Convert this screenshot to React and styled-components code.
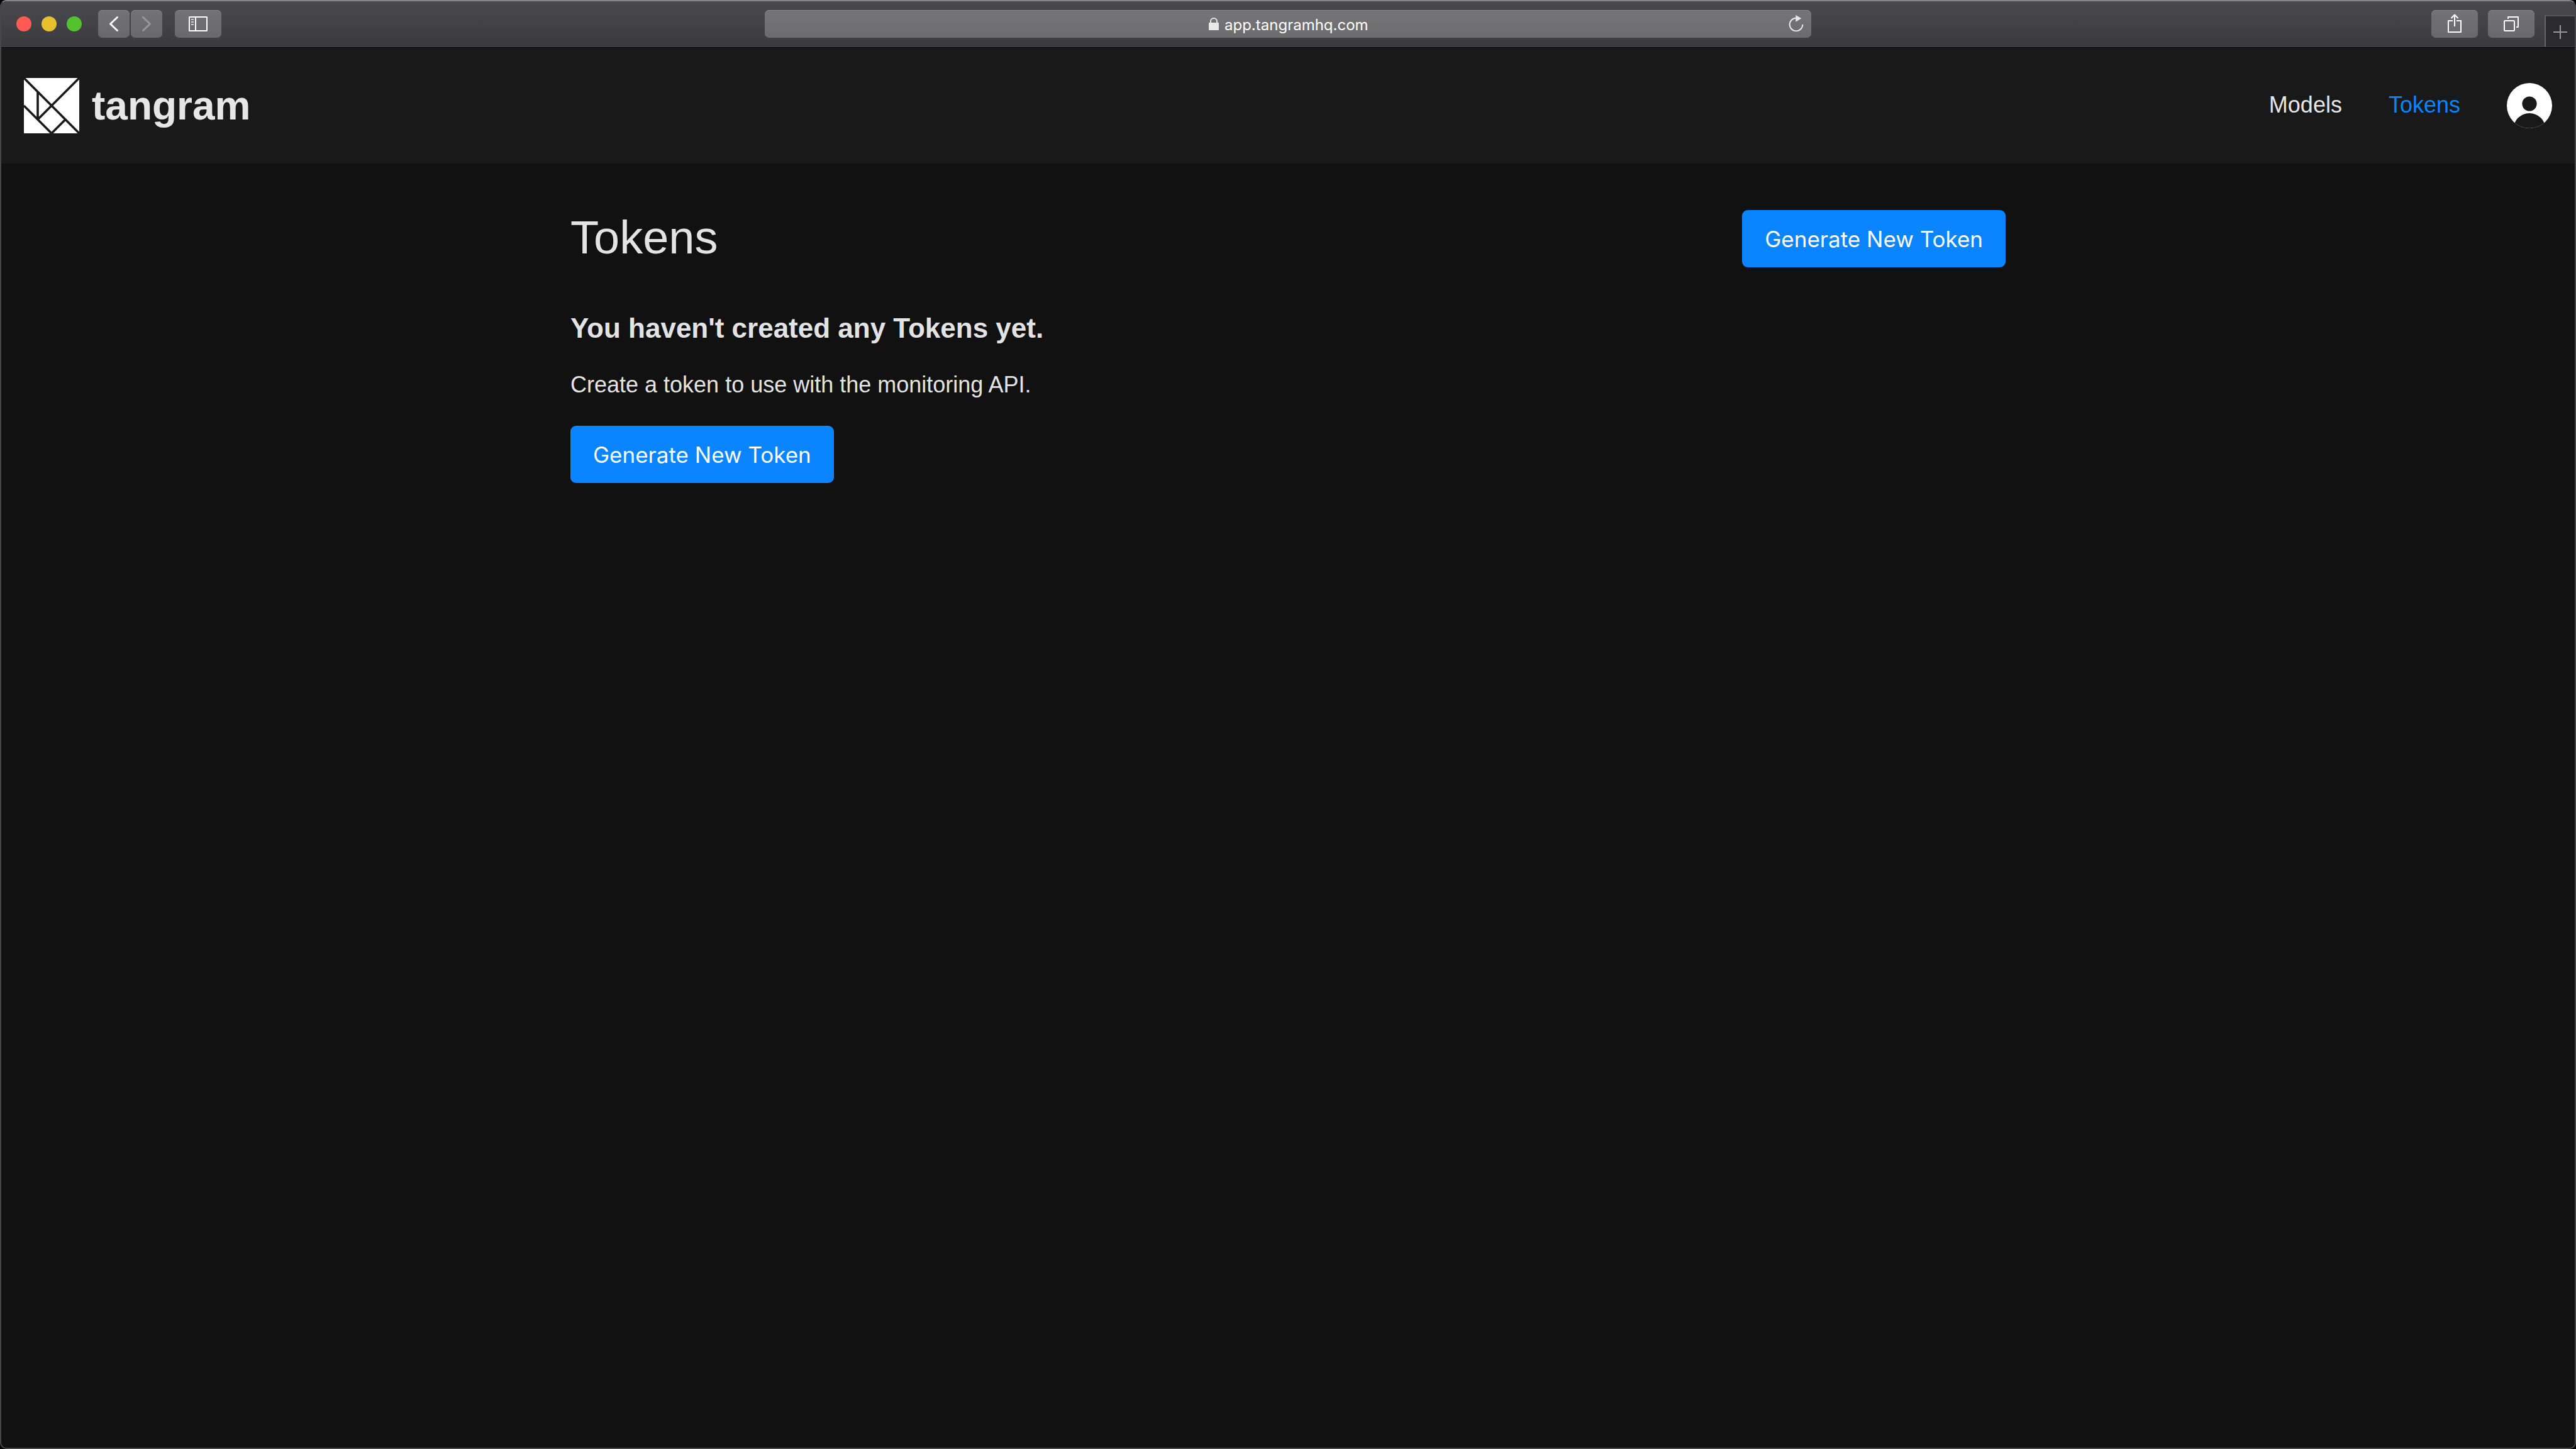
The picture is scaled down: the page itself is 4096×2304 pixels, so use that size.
import React from "react";
import styled, { createGlobalStyle } from "styled-components";

const GlobalStyle = createGlobalStyle`
  *, *::before, *::after { box-sizing: border-box; }
  body {
    margin: 0;
    background: #000;
    font-family: "Liberation Sans", Arial, sans-serif;
    font-size: 36px;
    color: #e2e3e2;
  }
  h1, h2, p { margin: 0; }
  a { text-decoration: none; color: inherit; }
  svg { display: block; flex: none; }
`;

const BrowserWindow = styled.div`
  display: flex;
  flex-direction: column;
  min-height: 100vh;
  border: 2px solid #474747;
  border-top-color: #868689;
  border-radius: 10px;
  background: #111;
  overflow: hidden;
`;

const Toolbar = styled.div`
  display: grid;
  grid-template-columns: 1fr minmax(0, 1664px) 1fr;
  align-items: center;
  height: 73px;
  background: linear-gradient(#4a494e, #3b3a3f);
  border-bottom: 1px solid #424146;
`;

const ToolbarStart = styled.div`
  display: flex;
  align-items: center;
  gap: 20px;
  padding-left: 24px;
`;

const ToolbarEnd = styled.div`
  display: flex;
  align-items: center;
  justify-content: flex-end;
  align-self: stretch;
  gap: 16px;
`;

const TrafficLights = styled.div`
  display: flex;
  gap: 16px;
  margin-right: 6px;
`;

const Light = styled.button`
  width: 24px;
  height: 24px;
  padding: 0;
  border: 0;
  border-radius: 50%;
  background: ${(p) => p.$color};
`;

const HistoryButtons = styled.div`
  display: flex;
  gap: 2px;
`;

const ToolButton = styled.button`
  display: flex;
  width: ${(p) => p.$width}px;
  height: 44px;
  padding: 0;
  border: 0;
  border-radius: 7px;
  background: linear-gradient(#737277, #69686d);
  box-shadow: inset 0 1px #88878b;
  color: ${(p) => (p.$muted ? "#98979b" : "#fff")};
`;

const NewTabButton = styled.button`
  align-self: flex-end;
  width: 48px;
  height: 50px;
  padding: 0;
  border: 0 solid #656468;
  border-width: 2px 0 0 2px;
  border-top-color: #555458;
  background: #2b2b2d;
  color: #98989a;
`;

const AddressBar = styled.div`
  display: grid;
  grid-template-columns: 1fr auto 1fr;
  align-items: center;
  height: 44px;
  border-radius: 7px;
  background: linear-gradient(#757577, #6c6c6e);
  box-shadow: inset 0 1px #8a8a8c;
`;

const Address = styled.label`
  grid-column: 2;
  display: flex;
  align-items: center;
  gap: 8px;
  color: #e8e8e8;
`;

const AddressInput = styled.input`
  width: 228px;
  height: 34px;
  padding: 2px 0 0;
  border: 0;
  background: transparent;
  color: #fff;
  font: 24px/32px Inter, sans-serif;
`;

const ReloadButton = styled.button`
  justify-self: end;
  padding: 0;
  margin-right: 12px;
  border: 0;
  background: transparent;
  color: #e8e8e8;
`;

const Header = styled.header`
  display: flex;
  align-items: center;
  justify-content: space-between;
  height: 185px;
  padding: 0 36px;
  border-top: 1px solid #000;
  background: #191919;
`;

const Brand = styled.a`
  display: flex;
  align-items: center;
  gap: 20px;
  font-size: 64px;
  font-weight: 700;
  color: #e6e6e6;
`;

const Nav = styled.nav`
  display: flex;
  align-items: center;
  gap: 74px;
`;

const NavLink = styled.a`
  padding-bottom: 2px;
  && { color: ${(p) => (p.$active ? "#0a84ff" : "#e6e6e6")}; }
`;

const Main = styled.main`
  display: flex;
  flex-direction: column;
  gap: 72px;
  width: 100%;
  max-width: 2282px;
  margin: 0 auto;
  padding: 74px 0;
`;

const TitleRow = styled.div`
  display: flex;
  align-items: flex-start;
  justify-content: space-between;
`;

const Title = styled.h1`
  font-size: 74px;
  font-weight: 400;
  line-height: 88px;
`;

const EmptyState = styled.section`
  display: flex;
  flex-direction: column;
  align-items: flex-start;
  gap: 36px;
`;

const EmptyTitle = styled.h2`
  font-size: 44px;
  line-height: 50px;
`;

const EmptyText = styled.p`
  line-height: 58px;
`;

const PrimaryButton = styled.button`
  height: 91px;
  padding: 0 36px;
  border: 0;
  border-radius: 9px;
  background: #0a84ff;
  color: #fff;
  font-family: Inter, sans-serif;
  font-size: 35px;
`;

const stroke = {
  fill: "none",
  stroke: "currentColor",
  strokeWidth: 2,
  strokeLinejoin: "round",
};

function TangramLogo() {
  return (
    <svg width="88" height="88" viewBox="0 0 88 88" aria-hidden="true">
      <rect width="88" height="88" fill="#fff" />
      <path
        d="M0 0L88 88M88 0L22 66M0 44L44 88M44 88L66 66M22 22V66"
        fill="none"
        stroke="#191919"
        strokeWidth="3.6"
      />
    </svg>
  );
}

function Avatar() {
  return (
    <svg width="72" height="72" viewBox="0 0 72 72" role="img" aria-label="Account">
      <clipPath id="avatar-clip">
        <circle cx="36" cy="36" r="36" />
      </clipPath>
      <g clipPath="url(#avatar-clip)">
        <rect width="72" height="72" fill="#fff" />
        <circle cx="36" cy="33" r="11.6" fill="#191919" />
        <circle cx="36" cy="73.8" r="25.8" fill="#191919" />
      </g>
    </svg>
  );
}

function BrowserToolbar() {
  return (
    <Toolbar>
      <ToolbarStart>
        <TrafficLights>
          <Light $color="#ff5b54" aria-label="Close" />
          <Light $color="#e6c02d" aria-label="Minimize" />
          <Light $color="#54c12e" aria-label="Zoom" />
        </TrafficLights>
        <HistoryButtons>
          <ToolButton $width={50} aria-label="Back">
            <svg width="50" height="44" {...stroke} strokeWidth="3" strokeLinecap="round">
              <path d="M30.5 11.5L19.5 22L30.5 32.5" />
            </svg>
          </ToolButton>
          <ToolButton $width={50} $muted aria-label="Forward">
            <svg width="50" height="44" {...stroke} strokeWidth="3" strokeLinecap="round">
              <path d="M19.5 11.5L30.5 22L19.5 32.5" />
            </svg>
          </ToolButton>
        </HistoryButtons>
        <ToolButton $width={74} aria-label="Sidebar">
          <svg width="74" height="44" {...stroke}>
            <rect x="23" y="11" width="28" height="22" rx="0.5" />
            <path d="M33 11V33" />
            <path d="M26 15H30M26 19H30M26 23H30" stroke="#d0d0d2" />
          </svg>
        </ToolButton>
      </ToolbarStart>
      <AddressBar>
        <Address>
          <svg width="18" height="20" viewBox="0 0 18 20">
            <rect x="1" y="8" width="16" height="12" rx="1" fill="currentColor" />
            <path d="M4 9V6a5 5 0 0 1 10 0V9" {...stroke} />
          </svg>
          <AddressInput aria-label="Address" defaultValue="app.tangramhq.com" />
        </Address>
        <ReloadButton aria-label="Reload">
          <svg width="24" height="30" viewBox="0 0 24 30">
            <path d="M22.3 16A10.3 10.3 0 1 1 12 5.7" {...stroke} />
            <path d="M11.3 1L20.3 6.3L11.3 11.7Z" fill="currentColor" />
          </svg>
        </ReloadButton>
      </AddressBar>
      <ToolbarEnd>
        <ToolButton $width={74} aria-label="Share">
          <svg width="74" height="44" {...stroke}>
            <path d="M34 17H27V35H47V17H40M37 26V8M31.5 13L37 7.5L42.5 13" />
          </svg>
        </ToolButton>
        <ToolButton $width={74} aria-label="Tab overview">
          <svg width="74" height="44" {...stroke}>
            <rect x="26" y="17" width="16" height="16" rx="1" />
            <path d="M32 14V11H48V27H45" />
          </svg>
        </ToolButton>
        <NewTabButton aria-label="New tab">
          <svg width="46" height="48" {...stroke}>
            <path d="M12 25H34M23 14V36" />
          </svg>
        </NewTabButton>
      </ToolbarEnd>
    </Toolbar>
  );
}

export default function App() {
  return (
    <BrowserWindow>
      <GlobalStyle />
      <BrowserToolbar />
      <Header>
        <Brand href="#">
          <TangramLogo />
          tangram
        </Brand>
        <Nav>
          <NavLink href="#models">Models</NavLink>
          <NavLink href="#tokens" $active>
            Tokens
          </NavLink>
          <a href="#account">
            <Avatar />
          </a>
        </Nav>
      </Header>
      <Main>
        <TitleRow>
          <Title>Tokens</Title>
          <PrimaryButton>Generate New Token</PrimaryButton>
        </TitleRow>
        <EmptyState>
          <EmptyTitle>You haven't created any Tokens yet.</EmptyTitle>
          <EmptyText>Create a token to use with the monitoring API.</EmptyText>
          <PrimaryButton>Generate New Token</PrimaryButton>
        </EmptyState>
      </Main>
    </BrowserWindow>
  );
}
